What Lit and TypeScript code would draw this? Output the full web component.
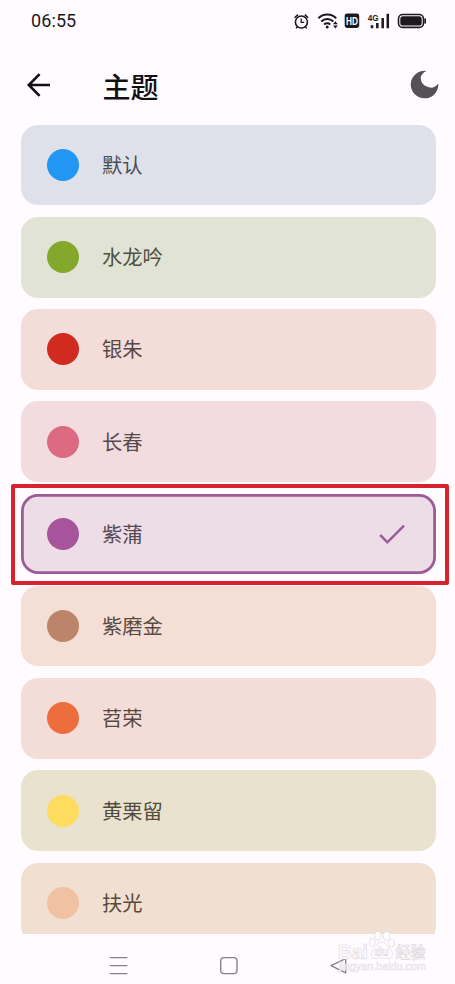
import { LitElement, html, css, svg } from "lit";
import { customElement, property } from "lit/decorators.js";
import { classMap } from "lit/directives/class-map.js";
import { styleMap } from "lit/directives/style-map.js";

interface Theme {
  name: string;
  dot: string;
  tint: string;
  ink: string;
}

const THEMES: Theme[] = [
  { name: "默认", dot: "#2196f3", tint: "#dfe1ea", ink: "#4b4d55" },
  { name: "水龙吟", dot: "#83a82c", tint: "#e1e4d4", ink: "#4d5042" },
  { name: "银朱", dot: "#d12b20", tint: "#f4ddd8", ink: "#584846" },
  { name: "长春", dot: "#dc6b82", tint: "#f2dcdf", ink: "#58494b" },
  { name: "紫蒲", dot: "#a6559d", tint: "#eddde7", ink: "#544a51" },
  { name: "紫磨金", dot: "#bc846b", tint: "#f4ded5", ink: "#584a43" },
  { name: "苕荣", dot: "#ed6d3d", tint: "#f4ddd7", ink: "#584844" },
  { name: "黄栗留", dot: "#fedc5e", tint: "#e8e2cf", ink: "#504c3e" },
  { name: "扶光", dot: "#f0c2a2", tint: "#f1dfd1", ink: "#564a3f" },
];

@customElement("status-bar")
class StatusBar extends LitElement {
  static styles = css`
    :host {
      display: flex;
      height: 42px;
      padding: 0 27px 0 31px;
      align-items: center;
      justify-content: space-between;
      box-sizing: border-box;
      color: #1b191c;
    }
    .time {
      font: 400 18px/22px Roboto, sans-serif;
      letter-spacing: 0.1px;
    }
    svg {
      display: block;
      width: 136px;
      height: 24px;
    }
    .mark {
      font: 700 11.5px "Liberation Sans", sans-serif;
    }
    .net {
      font: 700 9px "Liberation Sans", sans-serif;
    }
  `;

  render() {
    return html`
      <span class="time">06:55</span>
      <svg viewBox="292 9 136 24" fill="none" stroke="#1b191c">
        <circle cx="301.4" cy="22" r="6" stroke-width="1.6" />
        <path d="M301.2 18.6v3.8h3" stroke-width="1.3" />
        <path d="M294.6 17.8l3.4-3.2M304.8 14.6l3.4 3.2M297.6 26.4l-1.5 2M305.2 26.4l1.5 2" stroke-width="1.5" />
        <path d="M318.4 18.3a12.4 12.4 0 0 1 17.8 0M321.3 21.5a8.4 8.4 0 0 1 12 0M324.1 24.5a4.6 4.6 0 0 1 6.2 0" stroke-width="2" />
        <circle cx="327.2" cy="27.1" r="1.5" fill="#1b191c" stroke="none" />
        <path d="M333 24.2l2.400-2.900 2.400 2.900zM333 25.600l2.400 2.900 2.400-2.900z" fill="#1b191c" stroke="none" />
        <rect x="344.700" y="13.400" width="14.500" height="14.600" rx="2.400" fill="#1b191c" stroke="none" />
        <text class="mark" x="346" y="24.900" textLength="12" lengthAdjust="spacingAndGlyphs" fill="#fffbff" stroke="none">HD</text>
        <text class="net" x="367.800" y="20.700" textLength="10.800" lengthAdjust="spacingAndGlyphs" fill="#1b191c" stroke="none">4G</text>
        <path d="M372 25.200v3M377.300 23v5.200M382.700 18v10.200M387.800 13.700v14.500" stroke-width="2.500" />
        <rect x="398.500" y="14.500" width="25" height="12.900" rx="4.200" stroke-width="1.600" />
        <rect x="400.300" y="16.300" width="21.400" height="9.300" rx="2.600" fill="#1b191c" stroke="none" />
        <path d="M425.200 18.600v4.800" stroke-width="1.600" />
      </svg>
    `;
  }
}

@customElement("title-bar")
class TitleBar extends LitElement {
  static styles = css`
    :host {
      display: flex;
      height: 82.7px;
      align-items: center;
      padding: 0 16px 0 26px;
      box-sizing: border-box;
    }
    svg {
      display: block;
      flex: none;
    }
    .back {
      width: 25px;
      height: 24px;
      margin-top: 3px;
    }
    h1 {
      margin: 6px auto 0 51.5px;
      font: 500 28px/40px "Noto Sans CJK SC", sans-serif;
      color: #111012;
    }
    .moon {
      width: 29px;
      height: 30px;
      margin-top: 3px;
    }
  `;

  render() {
    return html`
      <svg class="back" viewBox="26 73 25 24" fill="none" stroke="#111012" stroke-width="2.6">
        <path d="M50 85H29M39.6 74.2L28.8 85l10.8 10.8" />
      </svg>
      <h1>主题</h1>
      <svg class="moon" viewBox="410 69.5 29 30" fill="#545255">
        <path d="M426.4 70.4A13.8 13.8 0 1 0 438.3 83A9.700 9.700 0 0 1 420.800 76.500A9.700 9.700 0 0 1 426.400 70.400Z" />
      </svg>
    `;
  }
}

@customElement("theme-card")
class ThemeCard extends LitElement {
  @property({ attribute: false }) theme!: Theme;
  @property({ type: Boolean }) selected = false;

  static styles = css`
    :host {
      display: block;
      flex: none;
      position: relative;
    }
    .card {
      display: flex;
      align-items: center;
      height: 80.6px;
      box-sizing: border-box;
      padding: 0 30px 0 26px;
      border-radius: 17px;
    }
    .selected {
      box-shadow: inset 0 0 0 2.8px #9c5b98;
    }
    .dot {
      width: 32px;
      height: 32px;
      border-radius: 50%;
    }
    .name {
      margin: -2px auto 0 23px;
      font: 400 20.3px/30px "Noto Sans CJK SC", sans-serif;
    }
    .check {
      width: 28px;
      height: 22px;
    }
    .frame {
      position: absolute;
      inset: -10px -13px -10.4px -10.4px;
      border: 4px solid #d8232e;
      border-radius: 2px;
      z-index: 1;
    }
  `;

  render() {
    const t = this.theme;
    return html`
      <div
        class=${classMap({ card: true, selected: this.selected })}
        style=${styleMap({ backgroundColor: t.tint, color: t.ink })}
      >
        <span class="dot" style=${styleMap({ backgroundColor: t.dot })}></span>
        <span class="name">${t.name}</span>
        ${this.selected
          ? html`<svg class="check" viewBox="379 523 28 22" fill="none" stroke="#9c5b98" stroke-width="2.5">
              <path d="M381.2 535l7.2 7.3L405 525.6" />
            </svg>`
          : null}
      </div>
      ${this.selected ? html`<div class="frame"></div>` : null}
    `;
  }
}

@customElement("nav-bar")
class NavBar extends LitElement {
  static styles = css`
    :host {
      display: block;
      height: 50.4px;
      flex: none;
      position: relative;
    }
    svg {
      display: block;
      width: 455px;
      height: 50.4px;
      overflow: visible;
    }
    .brand {
      font: 700 21px "Liberation Sans", sans-serif;
    }
    .du {
      font: 700 13px "Liberation Sans", sans-serif;
    }
    .cn {
      font: 500 16px "Noto Sans CJK SC", sans-serif;
    }
    .url {
      font: 400 10px "Liberation Sans", sans-serif;
    }
  `;

  render() {
    const paw = svg`
      <ellipse cx="372.400" cy="942" rx="3" ry="4" />
      <ellipse cx="378" cy="935.300" rx="3.200" ry="4.300" />
      <ellipse cx="386.600" cy="935.600" rx="3.200" ry="4.300" />
      <ellipse cx="391.600" cy="943" rx="3" ry="4" />
      <path d="M381.500 941.500c-3.800 0-4.600 4.200-7.300 6.500-4.200 3.500-3.800 10 1.600 10.200 2.500.1 3.300-.8 5.800-.8s4 .9 6.500.8c5.500-.2 5.400-7.400 1.400-10.400-2.900-2.300-3.900-6.300-8-6.300z" />
    `;
    return html`
      <svg viewBox="0 933.6 455 50.4" fill="none">
        <path d="M110 957.3h17.400M110 965.3h17.400M110 973.3h17.400" stroke="#858287" stroke-width="1.3" />
        <rect x="220.700" y="957.200" width="16.300" height="16" rx="3.300" stroke="#858287" stroke-width="1.400" />
        <path d="M345.700 958.300v14.200L331 965.200z" stroke="#858287" stroke-width="1.300" stroke-linejoin="round" />
        <g fill="#fffdff" stroke="#dcd7dc" stroke-width="0.7">
          <text class="brand" x="338" y="958.500" textLength="30" lengthAdjust="spacingAndGlyphs">Bai</text>
          ${paw}
          <text class="du" x="374" y="956" textLength="15" lengthAdjust="spacingAndGlyphs">du</text>
          <text class="cn" x="395.500" y="957.500" textLength="30" lengthAdjust="spacingAndGlyphs">经验</text>
        </g>
        <text class="url" x="339" y="969.500" textLength="87" lengthAdjust="spacingAndGlyphs" fill="#fffdff" stroke="#e8e3e8" stroke-width="0.6">jingyan.baidu.com</text>
      </svg>
    `;
  }
}

@customElement("app-root")
class AppRoot extends LitElement {
  static styles = css`
    :host {
      display: flex;
      flex-direction: column;
      width: 455px;
      height: 984px;
      overflow: hidden;
      background: #fffbff;
    }
    .list {
      flex: 1;
      min-height: 0;
      overflow: hidden;
      display: flex;
      flex-direction: column;
      gap: 11.65px;
      padding: 0 19px 0 21px;
    }
  `;

  render() {
    return html`
      <status-bar></status-bar>
      <title-bar></title-bar>
      <main class="list">
        ${THEMES.map(
          (t) => html`<theme-card .theme=${t} ?selected=${t.name === "紫蒲"}></theme-card>`
        )}
      </main>
      <nav-bar></nav-bar>
    `;
  }
}
